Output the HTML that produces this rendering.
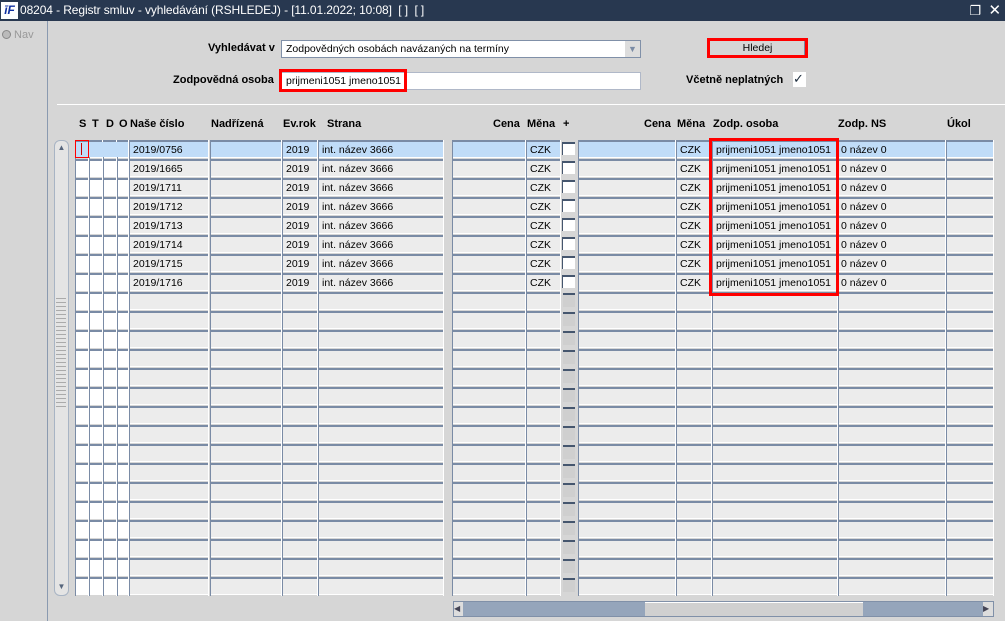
<!DOCTYPE html>
<html><head><meta charset="utf-8"><style>
*{margin:0;padding:0;box-sizing:border-box}
body{width:1005px;height:621px;overflow:hidden;background:#d6d6d6;font-family:"Liberation Sans",Arial,sans-serif;font-size:10.5px;color:#000;position:relative}
.a{position:absolute}
#title{left:0;top:0;width:1005px;height:21px;background:#283850;color:#fff;font-size:12px;line-height:21px;letter-spacing:-0.1px}
.b{font-weight:bold;font-size:11px}
.col{position:absolute;top:140px;height:456px;background:repeating-linear-gradient(to bottom,#7a8ba5 0,#7a8ba5 2px,#ececec 2px,#ececec 17px,#fff 17px,#fff 18px,transparent 18px,transparent 19px);border-left:1px solid #7a8ba5;border-right:1px solid #fff}
.w{background:repeating-linear-gradient(to bottom,#7a8ba5 0,#7a8ba5 2px,#fff 2px,#fff 17px,#fff 17px,#fff 18px,transparent 18px,transparent 19px)}
.t{position:absolute;height:16px;line-height:16px;padding-left:3px;white-space:nowrap}
.hl{position:absolute;top:142px;height:15px;background:#c0dcf8}
.chk{position:absolute;left:562px;width:13px;height:13px;border-top:2px solid #45566e;border-left:1px solid #45566e;background:#fff}
.red{position:absolute;border:3px solid #f00}
</style></head><body>
<div id="title" class="a"><span style="display:inline-block;width:17px;height:17px;margin:2px 2px 0 1px;background:#fff;color:#1030a0;font-weight:bold;font-style:italic;font-size:12px;line-height:17px;text-align:center;vertical-align:top">īF</span>08204 - Registr smluv - vyhledávání (RSHLEDEJ) - [11.01.2022; 10:08] &nbsp;[ ] &nbsp;[ ]<span class="a" style="right:24px;top:0;font-size:13px">❐</span><span class="a" style="right:4px;top:0;font-size:15px">✕</span></div>
<div class="a" style="left:0;top:21px;width:48px;height:600px;background:#d6d6d6;border-right:1px solid #8a9ab0"></div>
<div class="a" style="left:2px;top:29px;color:#999;font-size:11px"><span style="display:inline-block;width:9px;height:9px;border-radius:50%;background:#bbb;border:1px solid #888;vertical-align:-1px"></span> Nav</div>

<div class="a b" style="left:208px;top:42px">Vyhledávat v</div>
<div class="a" style="left:281px;top:40px;width:360px;height:18px;background:#fff;border:1px solid #8090a8;line-height:16px;padding-left:4px">Zodpovědných osobách navázaných na termíny<div class="a" style="right:0;top:0;width:15px;height:16px;background:#ddd;color:#7a8ba5;font-size:9px;text-align:center">▼</div></div>
<div class="a b" style="left:173px;top:74px">Zodpovědná osoba</div>
<div class="a" style="left:281px;top:72px;width:360px;height:18px;background:#fff;border:1px solid #b0b8c8;line-height:16px;padding-left:4px">prijmeni1051 jmeno1051</div>
<div class="red" style="left:279px;top:69px;width:128px;height:23px"></div>
<div class="a" style="left:711px;top:41px;width:95px;height:14px;background:#d6d6d6;border-right:2px solid #7a8ba5;text-align:center;line-height:14px">Hledej</div>
<div class="red" style="left:707px;top:38px;width:101px;height:20px"></div>
<div class="a b" style="left:686px;top:74px">Včetně neplatných</div>
<div class="a" style="left:793px;top:72px;width:13px;height:15px;background:#fff;font-size:13px;line-height:14px;color:#203040">✓</div>
<div class="a" style="left:57px;top:104px;width:948px;height:1px;background:#8a8a8a;border-bottom:1px solid #fff"></div>

<div class="a b" style="left:79px;top:118px">S</div><div class="a b" style="left:92px;top:118px">T</div><div class="a b" style="left:106px;top:118px">D</div><div class="a b" style="left:119px;top:118px">O</div>
<div class="a b" style="left:130px;top:118px">Naše číslo</div><div class="a b" style="left:211px;top:118px">Nadřízená</div><div class="a b" style="left:283px;top:118px">Ev.rok</div><div class="a b" style="left:327px;top:118px">Strana</div>
<div class="a b" style="left:493px;top:118px">Cena</div><div class="a b" style="left:527px;top:118px">Měna</div><div class="a b" style="left:563px;top:118px">+</div>
<div class="a b" style="left:644px;top:118px">Cena</div><div class="a b" style="left:677px;top:118px">Měna</div><div class="a b" style="left:713px;top:118px">Zodp. osoba</div><div class="a b" style="left:838px;top:118px">Zodp. NS</div><div class="a b" style="left:947px;top:118px">Úkol</div>

<div class="col w" style="left:75px;width:14px"></div><div class="col w" style="left:89px;width:14px"></div><div class="col w" style="left:103px;width:14px"></div><div class="col w" style="left:117px;width:12px"></div>
<div class="col" style="left:129px;width:80px"></div><div class="col" style="left:210px;width:72px"></div><div class="col" style="left:282px;width:36px"></div><div class="col" style="left:318px;width:126px"></div>
<div class="col" style="left:452px;width:74px"></div><div class="col" style="left:526px;width:35px"></div>
<div class="col" style="left:578px;width:98px"></div><div class="col" style="left:676px;width:36px"></div><div class="col" style="left:712px;width:126px"></div><div class="col" style="left:838px;width:108px"></div><div class="col" style="left:946px;width:48px"></div>

<div class="hl" style="left:76px;width:52px"></div><div class="hl" style="left:130px;width:78px"></div><div class="hl" style="left:211px;width:70px"></div><div class="hl" style="left:283px;width:34px"></div><div class="hl" style="left:319px;width:124px"></div><div class="hl" style="left:453px;width:72px"></div><div class="hl" style="left:527px;width:33px"></div><div class="hl" style="left:579px;width:96px"></div><div class="hl" style="left:677px;width:34px"></div><div class="hl" style="left:713px;width:124px"></div><div class="hl" style="left:839px;width:106px"></div><div class="hl" style="left:947px;width:46px"></div>
<div class="a" style="left:75px;top:140px;width:14px;height:18px;border:1px solid #f00"><div class="a" style="left:5px;top:2px;width:1px;height:12px;background:#c00"></div></div>

<div class="a" style="left:54px;top:140px;width:15px;height:456px;background:#e4e4e4;border:1px solid #a8b4c4;border-radius:6px"></div>
<div class="a" style="left:55px;top:141px;width:13px;height:14px;color:#56657c;font-size:8px;text-align:center;line-height:14px">▲</div>
<div class="a" style="left:55px;top:580px;width:13px;height:14px;color:#56657c;font-size:8px;text-align:center;line-height:14px">▼</div>
<div class="a" style="left:56px;top:298px;width:10px;height:110px;background:repeating-linear-gradient(to bottom,#aaa 0,#aaa 1px,transparent 1px,transparent 4px)"></div>

<div class="a" style="left:0;top:142px">
<div class="t" style="left:130px;top:0">2019/0756</div><div class="t" style="left:283px;top:0">2019</div><div class="t" style="left:319px;top:0">int. název 3666</div><div class="t" style="left:527px;top:0">CZK</div><div class="t" style="left:677px;top:0">CZK</div><div class="t" style="left:713px;top:0">prijmeni1051 jmeno1051</div><div class="t" style="left:838px;top:0">0 název 0</div>
<div class="t" style="left:130px;top:19px">2019/1665</div><div class="t" style="left:283px;top:19px">2019</div><div class="t" style="left:319px;top:19px">int. název 3666</div><div class="t" style="left:527px;top:19px">CZK</div><div class="t" style="left:677px;top:19px">CZK</div><div class="t" style="left:713px;top:19px">prijmeni1051 jmeno1051</div><div class="t" style="left:838px;top:19px">0 název 0</div>
<div class="t" style="left:130px;top:38px">2019/1711</div><div class="t" style="left:283px;top:38px">2019</div><div class="t" style="left:319px;top:38px">int. název 3666</div><div class="t" style="left:527px;top:38px">CZK</div><div class="t" style="left:677px;top:38px">CZK</div><div class="t" style="left:713px;top:38px">prijmeni1051 jmeno1051</div><div class="t" style="left:838px;top:38px">0 název 0</div>
<div class="t" style="left:130px;top:57px">2019/1712</div><div class="t" style="left:283px;top:57px">2019</div><div class="t" style="left:319px;top:57px">int. název 3666</div><div class="t" style="left:527px;top:57px">CZK</div><div class="t" style="left:677px;top:57px">CZK</div><div class="t" style="left:713px;top:57px">prijmeni1051 jmeno1051</div><div class="t" style="left:838px;top:57px">0 název 0</div>
<div class="t" style="left:130px;top:76px">2019/1713</div><div class="t" style="left:283px;top:76px">2019</div><div class="t" style="left:319px;top:76px">int. název 3666</div><div class="t" style="left:527px;top:76px">CZK</div><div class="t" style="left:677px;top:76px">CZK</div><div class="t" style="left:713px;top:76px">prijmeni1051 jmeno1051</div><div class="t" style="left:838px;top:76px">0 název 0</div>
<div class="t" style="left:130px;top:95px">2019/1714</div><div class="t" style="left:283px;top:95px">2019</div><div class="t" style="left:319px;top:95px">int. název 3666</div><div class="t" style="left:527px;top:95px">CZK</div><div class="t" style="left:677px;top:95px">CZK</div><div class="t" style="left:713px;top:95px">prijmeni1051 jmeno1051</div><div class="t" style="left:838px;top:95px">0 název 0</div>
<div class="t" style="left:130px;top:114px">2019/1715</div><div class="t" style="left:283px;top:114px">2019</div><div class="t" style="left:319px;top:114px">int. název 3666</div><div class="t" style="left:527px;top:114px">CZK</div><div class="t" style="left:677px;top:114px">CZK</div><div class="t" style="left:713px;top:114px">prijmeni1051 jmeno1051</div><div class="t" style="left:838px;top:114px">0 název 0</div>
<div class="t" style="left:130px;top:133px">2019/1716</div><div class="t" style="left:283px;top:133px">2019</div><div class="t" style="left:319px;top:133px">int. název 3666</div><div class="t" style="left:527px;top:133px">CZK</div><div class="t" style="left:677px;top:133px">CZK</div><div class="t" style="left:713px;top:133px">prijmeni1051 jmeno1051</div><div class="t" style="left:838px;top:133px">0 název 0</div>
</div>
<div class="chk" style="top:142px"></div><div class="chk" style="top:161px"></div><div class="chk" style="top:180px"></div><div class="chk" style="top:199px"></div><div class="chk" style="top:218px"></div><div class="chk" style="top:237px"></div><div class="chk" style="top:256px"></div><div class="chk" style="top:275px"></div>
<div class="a" style="left:563px;top:293px;width:12px;height:303px;background:repeating-linear-gradient(to bottom,#45566e 0,#45566e 2px,#cfcfcf 2px,#cfcfcf 14px,transparent 14px,transparent 19px)"></div>
<div class="red" style="left:709px;top:138px;width:130px;height:158px"></div>

<div class="a" style="left:453px;top:601px;width:541px;height:16px;background:#95a5bb;border:1px solid #8090a8"></div>
<div class="a" style="left:454px;top:602px;width:9px;height:14px;background:#ddd;font-size:8px;line-height:14px;color:#445">◀</div>
<div class="a" style="left:983px;top:602px;width:10px;height:14px;background:#ddd;font-size:8px;line-height:14px;color:#445">▶</div>
<div class="a" style="left:645px;top:602px;width:218px;height:14px;background:#d0d0d0;border-top:1px solid #fff"></div>
</body></html>
